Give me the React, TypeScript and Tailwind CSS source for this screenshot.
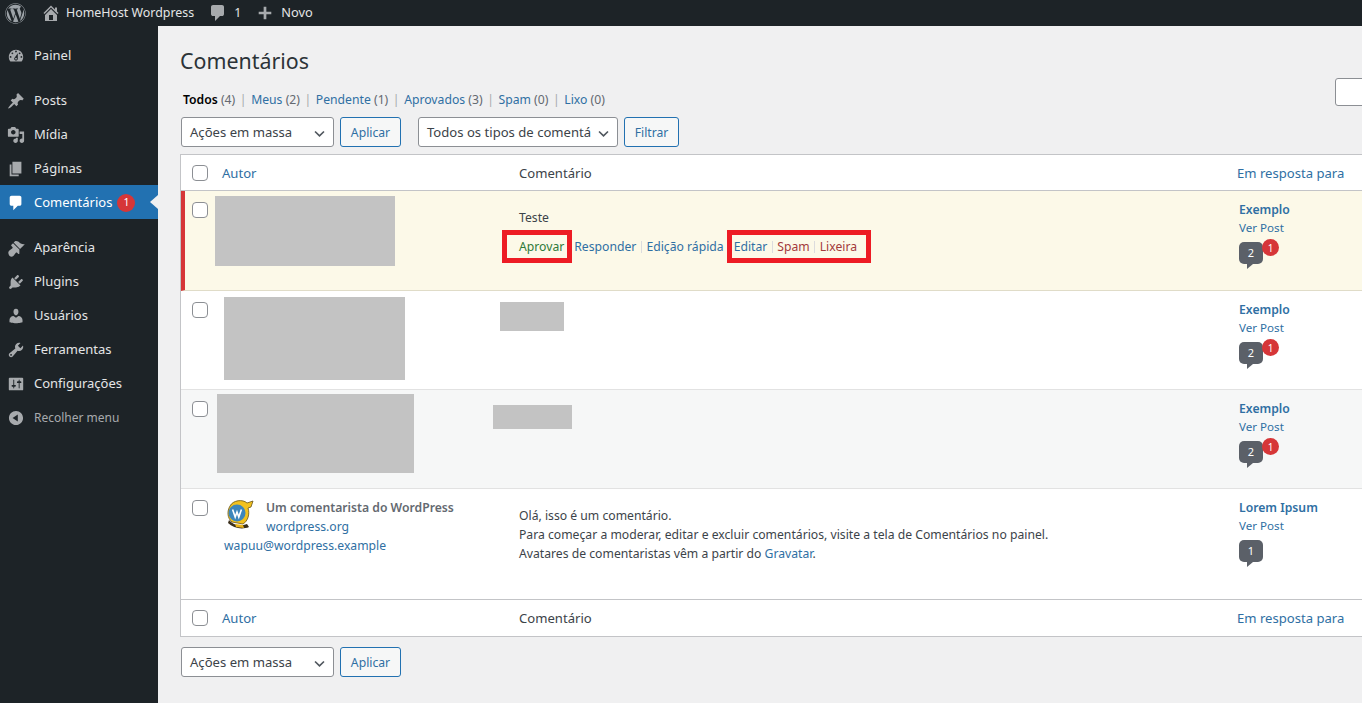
import { FaWordpress } from "react-icons/fa";

type DashIconProps = { d: string; className?: string };

function DashIcon({ d, className }: DashIconProps) {
  return (
    <svg viewBox="0 0 20 20" fill="currentColor" className={className} aria-hidden="true">
      <path d={d} />
    </svg>
  );
}

const icons = {
  dashboard:
    "M3.76 16h12.48c1.1-1.37 1.76-3.11 1.76-5 0-4.42-3.58-8-8-8s-8 3.58-8 8c0 1.89.66 3.63 1.76 5zM10 4c.55 0 1 .45 1 1s-.45 1-1 1-1-.45-1-1 .45-1 1-1zM6 6c.55 0 1 .45 1 1s-.45 1-1 1-1-.45-1-1 .45-1 1-1zm8 0c.55 0 1 .45 1 1s-.45 1-1 1-1-.45-1-1 .45-1 1-1zm-5.37 5.55L12 7v6c0 1.1-.9 2-2 2s-2-.9-2-2c0-.57.24-1.08.63-1.45zM4 10c.55 0 1 .45 1 1s-.45 1-1 1-1-.45-1-1 .45-1 1-1zm12 0c.55 0 1 .45 1 1s-.45 1-1 1-1-.45-1-1 .45-1 1-1zm-5 3c0-.55-.45-1-1-1s-1 .45-1 1 .45 1 1 1 1-.45 1-1z",
  post: "M10.44 3.02l1.82-1.82 6.36 6.35-1.83 1.82c-1.05-.68-2.48-.57-3.41.36l-.75.75c-.92.93-1.04 2.35-.35 3.41l-1.83 1.82-2.41-2.41-2.8 2.79c-.42.42-3.38 2.71-3.8 2.29s1.86-3.39 2.28-3.81l2.79-2.79L4.1 9.36l1.83-1.82c1.05.69 2.48.57 3.4-.36l.75-.75c.93-.92 1.05-2.35.36-3.41z",
  media:
    "M13 11V4c0-.55-.45-1-1-1h-1.67L9 1H5L3.67 3H2c-.55 0-1 .45-1 1v7c0 .55.45 1 1 1h10c.55 0 1-.45 1-1zM7 4.5c1.38 0 2.5 1.12 2.5 2.5S8.38 9.5 7 9.5 4.5 8.38 4.5 7 5.62 4.5 7 4.5zM14 6h5v10.5c0 1.38-1.12 2.5-2.5 2.5S14 17.88 14 16.5s1.12-2.5 2.5-2.5c.17 0 .34.02.5.05V9h-3V6zm-4 8.05V13h2v3.5c0 1.38-1.12 2.5-2.5 2.5S7 17.88 7 16.5 8.12 14 9.5 14c.17 0 .34.02.5.05z",
  page: "M6 15V2h10v13H6zm-1 1h8v2H3V5h2v11z",
  comments:
    "M5 2h9q.82 0 1.41.59T16 4v7q0 .82-.59 1.41T14 13h-2l-5 5v-5H5q-.82 0-1.41-.59T3 11V4q0-.82.59-1.41T5 2z",
  appearance:
    "M14.48 11.06L7.41 3.99l1.5-1.5c.5-.56 2.3-.47 3.51.32 1.21.8 1.43 1.28 2.91 2.1 1.18.64 2.45 1.26 4.45.85zm-.71.71L6.7 4.7 4.93 6.47c-.39.39-.39 1.02 0 1.41l1.06 1.06c.39.39.39 1.03 0 1.42-.6.6-1.43 1.11-2.21 1.69-.35.26-.7.53-1.01.84C1.43 13.71.96 15.65 2.15 17.85c1.18 2.2 3.46 2.39 5.17.68.31-.31.58-.66.84-1.01.58-.78 1.09-1.61 1.69-2.21.39-.39 1.02-.39 1.41 0l1.06 1.06c.39.39 1.02.39 1.41 0z",
  plugins:
    "M13.11 4.36L9.87 7.6 8 5.73l3.24-3.24c.35-.34 1.05-.2 1.56.32.52.51.66 1.21.31 1.55zm-8 1.77l.91-1.12 9.01 9.01-1.19.84c-.71.71-2.63 1.16-3.82 1.16H6.14L4.9 17.26c-.59.59-1.54.59-2.12 0-.59-.58-.59-1.53 0-2.12l1.24-1.24v-3.88c0-1.13.4-3.19 1.09-3.89zm7.26 3.97l3.24-3.24c.34-.35 1.04-.21 1.55.31.52.51.66 1.21.31 1.55l-3.24 3.25z",
  users:
    "M10 9.25c-2.27 0-2.73-3.44-2.73-3.44C7 4.02 7.82 2 9.97 2c2.16 0 2.98 2.02 2.71 3.81 0 0-.41 3.44-2.68 3.44zm0 2.57L12.72 10c2.39 0 4.52 2.33 4.52 4.53v2.49s-3.65 1.13-7.24 1.13c-3.65 0-7.24-1.13-7.24-1.13v-2.49c0-2.25 1.94-4.48 4.47-4.48z",
  tools:
    "M16.68 9.77c-1.34 1.34-3.3 1.67-4.95.99l-5.41 6.52c-.99.99-2.59.99-3.58 0s-.99-2.59 0-3.57l6.52-5.42c-.68-1.65-.35-3.61.99-4.95 1.28-1.28 3.12-1.62 4.72-1.06l-2.89 2.89 2.82 2.82 2.86-2.87c.53 1.58.18 3.39-1.08 4.65zM3.81 16.21c.4.39 1.04.39 1.43 0 .4-.4.4-1.04 0-1.43-.39-.4-1.03-.4-1.43 0-.39.39-.39 1.03 0 1.43z",
  settings:
    "M18 16V4c0-.55-.45-1-1-1H3c-.55 0-1 .45-1 1v12c0 .55.45 1 1 1h14c.55 0 1-.45 1-1zM8 11h1c.55 0 1 .45 1 1s-.45 1-1 1H8v1.5c0 .28-.22.5-.5.5s-.5-.22-.5-.5V13H6c-.55 0-1-.45-1-1s.45-1 1-1h1V5.5c0-.28.22-.5.5-.5s.5.22.5.5V11zm5-2h-1c-.55 0-1-.45-1-1s.45-1 1-1h1V5.5c0-.28.22-.5.5-.5s.5.22.5.5V7h1c.55 0 1 .45 1 1s-.45 1-1 1h-1v5.5c0 .28-.22.5-.5.5s-.5-.22-.5-.5V9z",
  collapse:
    "M10 2.16c4.33 0 7.84 3.51 7.84 7.84s-3.51 7.84-7.84 7.84S2.16 14.33 2.16 10 5.71 2.16 10 2.16zm2 11.72V6.12L6.18 9.97z",
  home: "M16 8.5l1.53 1.53-1.06 1.06L10 4.62l-6.47 6.47-1.06-1.06L10 2.5l4 4v-2h2v4zm-6-2.46l6 5.99V18H4v-5.97zM12 17v-5H8v5h4z",
  plus: "M17 8.5v3h-5.5V17h-3v-5.5H3v-3h5.5V3h3v5.5z",
};

function TopBar() {
  return (
    <header className="flex h-[26px] shrink-0 items-center bg-[#1d2327] text-[12.4px] text-[#e4e5e6]">
      <FaWordpress className="ml-[5px] h-[21px] w-[21px] text-[#9ca2a7]" />
      <DashIcon d={icons.home} className="ml-[15px] h-[20px] w-[20px] text-[#a7aaad]" />
      <span className="ml-[5px]">HomeHost Wordpress</span>
      <DashIcon d={icons.comments} className="ml-[14px] h-[20px] w-[20px] text-[#a7aaad]" />
      <span className="ml-[6px]">1</span>
      <DashIcon d={icons.plus} className="ml-[15px] h-[18px] w-[18px] text-[#a7aaad]" />
      <span className="ml-[7px] text-[12.8px]">Novo</span>
    </header>
  );
}

type MenuItem = { label: string; icon: string; active?: boolean; badge?: string; spaced?: boolean };

const menu: MenuItem[] = [
  { label: "Painel", icon: icons.dashboard },
  { label: "Posts", icon: icons.post, spaced: true },
  { label: "Mídia", icon: icons.media },
  { label: "Páginas", icon: icons.page },
  { label: "Comentários", icon: icons.comments, active: true, badge: "1" },
  { label: "Aparência", icon: icons.appearance, spaced: true },
  { label: "Plugins", icon: icons.plugins },
  { label: "Usuários", icon: icons.users },
  { label: "Ferramentas", icon: icons.tools },
  { label: "Configurações", icon: icons.settings },
];

function Sidebar() {
  return (
    <nav className="w-[158px] shrink-0 bg-[#1d2327] pt-[12px] text-[13px] text-[#e4e5e6]">
      {menu.map((item) => (
        <div
          key={item.label}
          className={`relative flex h-[34px] items-center pt-[2px] ${item.spaced ? "mt-[11px]" : ""} ${item.active ? "bg-[#2271b1] text-white" : ""}`}
        >
          <DashIcon
            d={item.icon}
            className={`ml-[7px] h-[18px] w-[18px] ${item.active ? "text-white" : "text-[#a7aaad]"}`}
          />
          <span className="ml-[9px]">{item.label}</span>
          {item.badge && (
            <span className="ml-[5px] flex h-[18px] w-[18px] items-center justify-center rounded-full bg-[#d63638] text-[10.5px]">
              {item.badge}
            </span>
          )}
          {item.active && (
            <span className="absolute right-0 top-[10px] border-y-[7px] border-r-[8px] border-y-transparent border-r-[#f0f0f1]" />
          )}
        </div>
      ))}
      <div className="flex h-[34px] items-center pt-[2px] text-[#a7aaad]">
        <DashIcon d={icons.collapse} className="ml-[7px] h-[18px] w-[18px]" />
        <span className="ml-[9px] text-[12px]">Recolher menu</span>
      </div>
    </nav>
  );
}

function Checkbox() {
  return <span className="block h-[16px] w-[16px] rounded-[4px] border border-[#8c8f94] bg-white" />;
}

function Select({ label, width }: { label: string; width: string }) {
  return (
    <div
      className={`flex h-[30px] items-center justify-between overflow-hidden rounded-[3px] border border-[#8c8f94] bg-white pl-[8px] pr-[7px] pt-[2px] text-[13.1px] text-[#3c4349] ${width}`}
    >
      <span className="whitespace-nowrap">{label}</span>
      <svg viewBox="0 0 16 16" className="h-[13px] w-[13px] shrink-0 text-[#50575e]" fill="none" stroke="currentColor" strokeWidth="2">
        <path d="M2.5 5.5 8 11l5.5-5.5" />
      </svg>
    </div>
  );
}

function Button({ label, width }: { label: string; width: string }) {
  return (
    <div
      className={`flex h-[30px] items-center justify-center rounded-[3px] border border-[#2271b1] bg-[#f6f7f7] pt-[2px] text-[12.2px] text-[#2f6fa3] ${width}`}
    >
      {label}
    </div>
  );
}

function BulkActions() {
  return (
    <div className="ml-[1px] flex gap-[6px]">
      <Select label="Ações em massa" width="w-[153px]" />
      <Button label="Aplicar" width="w-[61px]" />
    </div>
  );
}

const statusLinks = [
  { label: "Todos", count: 4, current: true },
  { label: "Meus", count: 2 },
  { label: "Pendente", count: 1 },
  { label: "Aprovados", count: 3 },
  { label: "Spam", count: 0 },
  { label: "Lixo", count: 0 },
];

function StatusLinks() {
  return (
    <div className="flex h-[20px] items-center pl-[3px] text-[12.2px] text-[#646970]">
      {statusLinks.map((link, index) => (
        <span key={link.label} className="whitespace-nowrap">
          {index > 0 && <span className="mx-[4.6px] text-[#a7aaad]">|</span>}
          <span className={link.current ? "font-semibold text-[#000]" : "text-[#2f6fa3]"}>{link.label}</span>{" "}
          ({link.count})
        </span>
      ))}
    </div>
  );
}

function HeaderRow({ border }: { border: string }) {
  return (
    <div className={`flex h-[36px] items-center bg-white text-[13.1px] ${border}`}>
      <div className="flex w-[41px] shrink-0 pl-[11px]">
        <Checkbox />
      </div>
      <div className="w-[297px] shrink-0 pt-[2px] text-[#2f6fa3]">Autor</div>
      <div className="w-[720px] shrink-0 pt-[2px] text-[#3c4349]">Comentário</div>
      <div className="ml-[-2px] w-[140px] shrink-0 whitespace-nowrap pt-[2px] text-[#2f6fa3]">Em resposta para</div>
    </div>
  );
}

function ResponseCell({ post, count, pending }: { post: string; count: string; pending?: boolean }) {
  return (
    <div className="w-[140px] shrink-0 pt-[10px] text-[12.2px] leading-[18px]">
      <div className="font-semibold text-[#2f6fa3]">{post}</div>
      <div className="text-[11.6px] text-[#2f6fa3]">Ver Post</div>
      <div className="relative mt-[5px] h-[22px] w-[24px] rounded-[5px] bg-[#5b6068] text-center text-[11px] leading-[22px] text-white">
        {count}
        <span className="absolute left-[8px] top-[22px] border-r-[6px] border-t-[5px] border-r-transparent border-t-[#5b6068]" />
        {pending && (
          <span className="absolute left-[23px] top-[-3px] flex h-[17px] w-[17px] items-center justify-center rounded-full bg-[#d63638] text-[10px] leading-none text-white">
            1
          </span>
        )}
      </div>
    </div>
  );
}

function Redacted({ className }: { className: string }) {
  return <div className={`shrink-0 bg-[#c3c3c3] ${className}`} />;
}

function Wapuu() {
  return (
    <svg viewBox="0 0 32 32" className="ml-[-1px] mr-[1px] h-[32px] w-[32px] shrink-0" aria-hidden="true">
      <path d="M7 8C10 2 20 1 24 5L30 3 28 9 25 10C27 16 25 23 20 26L9 24C4 20 4 13 7 8Z" fill="#f2c11d" stroke="#6a5417" strokeWidth="0.8" />
      <circle cx="14" cy="15" r="8.5" fill="#3d86bb" />
      <path d="M9.6 11.6 12.2 19 14 14l1.8 5 2.6-7.4" fill="none" stroke="#ffffff" strokeWidth="1.6" />
      <path d="M6 22C10 27 17 29 24 26L26 29C19 32 10 30 5 25Z" fill="#3a2f1c" />
      <path d="M12 26 20 27 21 30 13 29Z" fill="#e9b21a" />
    </svg>
  );
}

function Sep() {
  return <span className="mx-[4.5px] h-[12px] w-[1px] bg-[#dcdcde]" />;
}

function CommentRows() {
  const sep = "border-b border-[#e2e2e2]";
  return (
    <>
      {/* pendente */}
      <div className="flex h-[100px] border-b border-[#e0dcc8] border-l-[4px] border-l-[#d63638] bg-[#fcf9e8]">
        <div className="w-[37px] shrink-0 pl-[7px] pt-[11px]">
          <Checkbox />
        </div>
        <div className="w-[297px] shrink-0 pt-[5px]">
          <Redacted className="ml-[-7px] h-[70px] w-[180px]" />
        </div>
        <div className="w-[720px] shrink-0 pt-[18px] text-[12.2px] text-[#3c4349]">
          <p>Teste</p>
          <div className="mt-[10px] flex h-[19px] items-center whitespace-nowrap text-[#2f6fa3]">
            <span className="text-[#2f7a3a]">Aprovar</span>
            <span className="ml-[10px]">Responder</span>
            <Sep />
            <span>Edição rápida</span>
            <span className="ml-[10px]">Editar</span>
            <Sep />
            <span className="text-[#a33a3b]">Spam</span>
            <Sep />
            <span className="text-[#a33a3b]">Lixeira</span>
          </div>
          {/* marcações vermelhas por cima do print */}
          <div className="relative">
            <span className="absolute left-[-17px] top-[-26px] h-[33px] w-[70px] border-[5px] border-[#ed1c24]" />
            <span className="absolute left-[208px] top-[-26px] h-[33px] w-[144px] border-[5px] border-[#ed1c24]" />
          </div>
        </div>
        <ResponseCell post="Exemplo" count="2" pending />
      </div>

      <div className={`flex h-[99px] bg-white ${sep}`}>
        <div className="w-[41px] shrink-0 pl-[11px] pt-[11px]">
          <Checkbox />
        </div>
        <div className="w-[297px] shrink-0 pt-[6px]">
          <Redacted className="ml-[2px] h-[83px] w-[181px]" />
        </div>
        <div className="w-[720px] shrink-0 pt-[11px]">
          <Redacted className="ml-[-19px] h-[29px] w-[64px]" />
        </div>
        <ResponseCell post="Exemplo" count="2" pending />
      </div>

      <div className={`flex h-[99px] bg-[#f6f7f7] ${sep}`}>
        <div className="w-[41px] shrink-0 pl-[11px] pt-[11px]">
          <Checkbox />
        </div>
        <div className="w-[297px] shrink-0 pt-[4px]">
          <Redacted className="ml-[-5px] h-[79px] w-[197px]" />
        </div>
        <div className="w-[720px] shrink-0 pt-[15px]">
          <Redacted className="ml-[-26px] h-[24px] w-[79px]" />
        </div>
        <ResponseCell post="Exemplo" count="2" pending />
      </div>

      <div className="flex h-[111px] border-b border-[#c3c4c7] bg-white">
        <div className="w-[41px] shrink-0 pl-[11px] pt-[11px]">
          <Checkbox />
        </div>
        <div className="w-[297px] shrink-0 pl-[2px] pt-[9px] text-[12.2px] leading-[19px]">
          <div className="flex">
            <Wapuu />
            <div className="ml-[10px]">
              <div className="font-semibold text-[#646970]">Um comentarista do WordPress</div>
              <div className="text-[#2f6fa3]">wordpress.org</div>
            </div>
          </div>
          <div className="text-[#2f6fa3]">wapuu@wordpress.example</div>
        </div>
        <div className="w-[720px] shrink-0 pt-[17px] text-[12.2px] leading-[19px] text-[#3c4349]">
          <p>Olá, isso é um comentário.</p>
          <p>Para começar a moderar, editar e excluir comentários, visite a tela de Comentários no painel.</p>
          <p>
            Avatares de comentaristas vêm a partir do <span className="text-[#2f6fa3]">Gravatar</span>.
          </p>
        </div>
        <ResponseCell post="Lorem Ipsum" count="1" />
      </div>
    </>
  );
}

export default function App() {
  return (
    <div className="flex h-[703px] w-[1362px] flex-col overflow-hidden bg-[#f0f0f1] font-['Noto_Sans',sans-serif]">
      <TopBar />
      <div className="flex min-h-0 flex-1">
        <Sidebar />
        <main className="min-w-0 flex-1 pl-[22px]">
          <div className="flex h-[53px] items-end justify-between">
            <h1 className="text-[21.4px] leading-[36px] text-[#2c3338]">Comentários</h1>
            <div className="mb-[-27px] mr-[-5px] h-[28px] w-[32px] rounded-[3px] border border-[#8c8f94] bg-white" />
          </div>
          <div className="mt-[11px]">
            <StatusLinks />
          </div>
          <div className="mt-[7px] flex gap-[6px]">
            <BulkActions />
            <div className="ml-[11px] flex gap-[6px]">
              <Select label="Todos os tipos de comentá" width="w-[200px]" />
              <Button label="Filtrar" width="w-[55px]" />
            </div>
          </div>
          <div className="mt-[7px] w-[1300px] border border-[#c3c4c7]">
            <HeaderRow border="border-b border-[#c3c4c7]" />
            <CommentRows />
            <HeaderRow border="" />
          </div>
          <div className="mt-[10px]">
            <BulkActions />
          </div>
        </main>
      </div>
    </div>
  );
}
